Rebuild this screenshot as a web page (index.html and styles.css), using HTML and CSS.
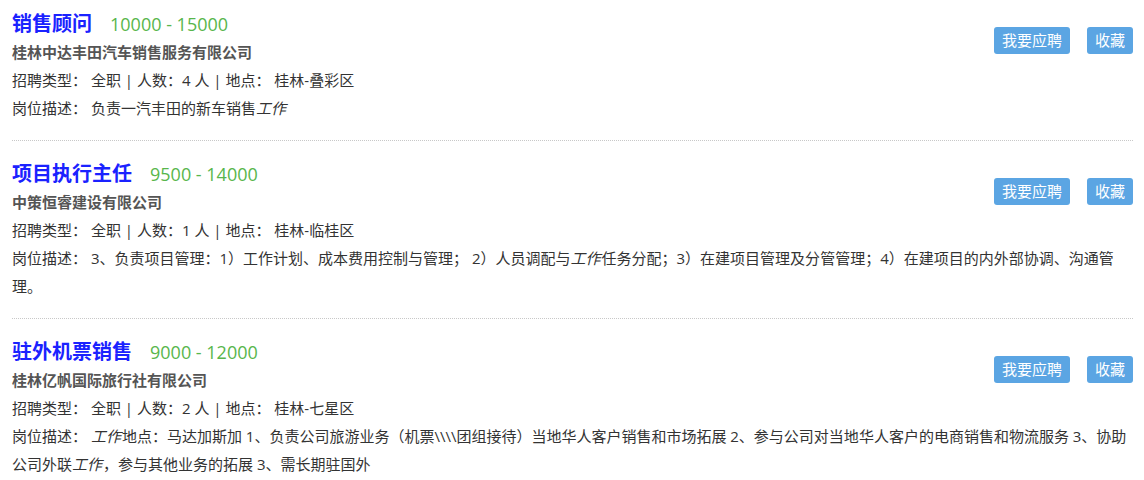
FILE: index.html
```html
<!DOCTYPE html>
<html lang="zh-CN">
<head>
  <meta charset="UTF-8"/>
  <meta name="viewport" content="width=device-width, initial-scale=1.0"/>
  <title>招聘信息</title>
  <link rel="stylesheet" href="styles.css">
</head>
<body>

  <div class="job-list">

    <div class="job-item">
      <div class="job-actions">
        <a class="job-btn" href="#">我要应聘</a>
        <a class="job-btn" href="#">收藏</a>
      </div>
      <h3 class="job-title">销售顾问<span class="job-salary">10000 - 15000</span></h3>
      <p class="job-company">桂林中达丰田汽车销售服务有限公司</p>
      <p class="job-line">招聘类型： 全职 | 人数：4 人 | 地点： 桂林-叠彩区</p>
      <p class="job-line">岗位描述： 负责一汽丰田的新车销售<i>工作</i></p>
    </div>

    <div class="job-item">
      <div class="job-actions">
        <a class="job-btn" href="#">我要应聘</a>
        <a class="job-btn" href="#">收藏</a>
      </div>
      <h3 class="job-title">项目执行主任<span class="job-salary">9500 - 14000</span></h3>
      <p class="job-company">中策恒睿建设有限公司</p>
      <p class="job-line">招聘类型： 全职 | 人数：1 人 | 地点： 桂林-临桂区</p>
      <p class="job-line">岗位描述： 3、负责项目管理：1）工作计划、成本费用控制与管理； 2）人员调配与<i>工作</i>任务分配；3）在建项目管理及分管管理；4）在建项目的内外部协调、沟通管理。</p>
    </div>

    <div class="job-item">
      <div class="job-actions">
        <a class="job-btn" href="#">我要应聘</a>
        <a class="job-btn" href="#">收藏</a>
      </div>
      <h3 class="job-title">驻外机票销售<span class="job-salary">9000 - 12000</span></h3>
      <p class="job-company">桂林亿帆国际旅行社有限公司</p>
      <p class="job-line">招聘类型： 全职 | 人数：2 人 | 地点： 桂林-七星区</p>
      <p class="job-line">岗位描述： <i>工作</i>地点：马达加斯加 1、负责公司旅游业务（机票\\\\团组接待）当地华人客户销售和市场拓展 2、参与公司对当地华人客户的电商销售和物流服务 3、协助<br>公司外联<i>工作</i>，参与其他业务的拓展 3、需长期驻国外</p>
    </div>

  </div>

</body>
</html>
```

FILE: styles.css
```css
body {
  margin: 0;
  font-family: "Open Sans", "Noto Sans CJK SC", sans-serif;
  font-size: 15px;
  color: #333;
  background: #fff;
}

.job-list {
  padding: 0 11px 0 12px;
}

.job-item {
  padding: 19px 0 18px;
  border-bottom: 1px dotted #c8c8c8;
}

.job-item:first-child {
  padding-top: 10px;
}

.job-item::after {
  content: "";
  display: block;
  clear: both;
}

.job-actions {
  float: right;
  display: flex;
  gap: 17px;
  margin-top: 18px;
}

.job-item:first-child .job-actions {
  margin-top: 17px;
}

.job-btn {
  display: block;
  padding: 0 8px;
  line-height: 27px;
  background: #5ba5e3;
  color: #fff;
  border-radius: 3px;
  text-decoration: none;
  font-size: 15px;
}

.job-title {
  margin: 0;
  font-size: 20px;
  line-height: 28px;
  font-weight: bold;
  color: #1a22ff;
}

.job-salary {
  margin-left: 18px;
  font-size: 18px;
  font-weight: normal;
  color: #58b64c;
}

.job-company {
  margin: 0;
  line-height: 28px;
  font-weight: bold;
  color: #555;
}

.job-line {
  margin: 0;
  line-height: 28px;
}

.job-line i {
  margin-right: 1px;
}
```
